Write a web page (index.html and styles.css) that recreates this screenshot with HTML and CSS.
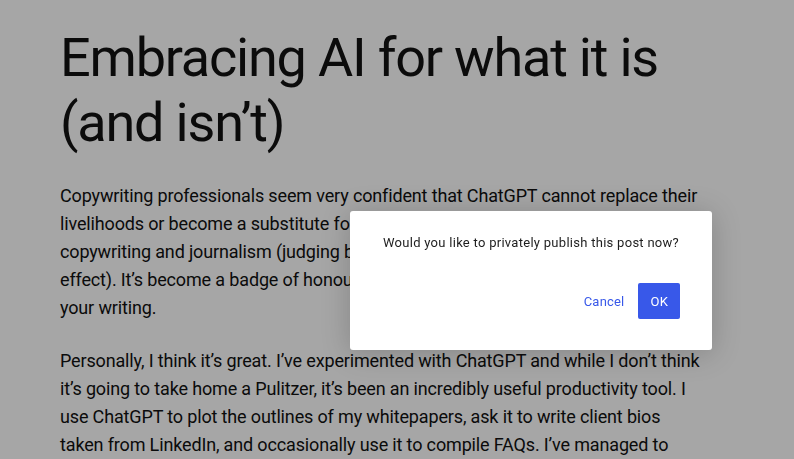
FILE: index.html
```html
<!DOCTYPE html>
<html lang="en">
<head>
    <meta charset="UTF-8">
    <meta name="viewport" content="width=device-width, initial-scale=1.0">
    <title>Embracing AI for what it is (and isn't)</title>
    <link rel="stylesheet" href="styles.css">
</head>
<body>
    <article class="post">
        <h1 class="post-title">Embracing AI for what it is (and isn’t)</h1>
        <p>Copywriting professionals seem very confident that ChatGPT cannot replace their livelihoods or become a substitute for the human creativity behind good copywriting and journalism (judging by the number of LinkedIn posts to this effect). It’s become a badge of honour to boast that you never use any AI tools in your writing.</p>
        <p>Personally, I think it’s great. I’ve experimented with ChatGPT and while I don’t think it’s going to take home a Pulitzer, it’s been an incredibly useful productivity tool. I use ChatGPT to plot the outlines of my whitepapers, ask it to write client bios taken from LinkedIn, and occasionally use it to compile FAQs. I’ve managed to save hours every week.</p>
    </article>

    <div class="overlay"></div>

    <div class="dialog">
        <p class="dialog-message">Would you like to privately publish this post now?</p>
        <div class="dialog-actions">
            <button class="btn btn-link">Cancel</button>
            <button class="btn btn-primary">OK</button>
        </div>
    </div>
</body>
</html>
```

FILE: styles.css
```css
body {
    margin: 0;
    background-color: #fff;
    color: #111;
    font-family: Roboto, "Noto Sans", sans-serif;
    overflow: hidden;
}
.post {
    width: 645px;
    padding: 25px 0 0 60px;
}
.post-title {
    margin: 0 0 27px;
    font-size: 54px;
    font-weight: 400;
    line-height: 65px;
    letter-spacing: -1.2px;
}
.post p {
    margin: 0 0 25px;
    font-size: 18px;
    line-height: 28px;
    letter-spacing: -0.15px;
}
.overlay {
    position: fixed;
    inset: 0;
    background-color: rgba(0, 0, 0, 0.35);
}
.dialog {
    position: absolute;
    left: 350px;
    top: 211px;
    width: 362px;
    height: 139px;
    box-sizing: border-box;
    padding: 22px 32px 0;
    background-color: #fff;
    border-radius: 3px;
    box-shadow: 0 3px 30px rgba(0, 0, 0, 0.2);
}
.dialog-message {
    margin: 0;
    font-size: 13px;
    line-height: 20px;
    letter-spacing: 0.28px;
    text-align: center;
    color: #1e1e1e;
}
.dialog-actions {
    display: flex;
    justify-content: flex-end;
    align-items: center;
    gap: 6px;
    margin-top: 30px;
}
.btn {
    height: 36px;
    padding: 0 8px;
    border: 0;
    border-radius: 2px;
    font-family: inherit;
    font-size: 13px;
    letter-spacing: 0.2px;
    cursor: pointer;
}
.btn-link {
    background: none;
    color: #3858e9;
}
.btn-primary {
    padding: 0 12px;
    background-color: #3858e9;
    color: #fff;
}
```
